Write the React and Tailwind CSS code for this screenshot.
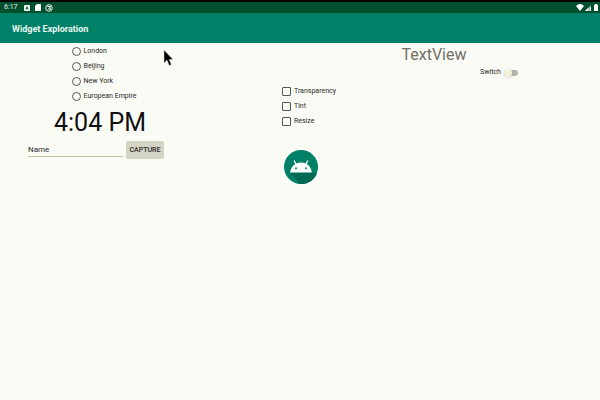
import React from "react";

const cities = ["London", "Beijing", "New York", "European Empire"];
const effects = ["Transparency", "Tint", "Resize"];

function StatusBar() {
  return (
    <div className="flex h-[13px] items-center border-t-2 border-black bg-[#005030] pl-1 pr-[2px] text-[7px] leading-none text-[#e2efe8]">
      <span className="w-5">6:17</span>
      <svg className="mr-[5px] h-[6px] w-[6px]" viewBox="0 0 6 6" aria-hidden="true">
        <rect width="6" height="6" rx="0.8" fill="#f2f7f4" />
        <path d="M2 4.5 3 1.5 4 4.5M2.3 3.6h1.4" fill="none" stroke="#005030" strokeWidth="0.8" />
      </svg>
      <svg className="mr-[4px] h-[7px] w-[6px]" viewBox="0 0 6 7" aria-hidden="true">
        <path d="M2 0h3.3q.7 0 .7.7v5.6q0 .7-.7.7H.7Q0 7 0 6.300V2z" fill="#fff" />
      </svg>
      <svg className="h-[8px] w-[8px]" viewBox="0 0 8 8" aria-hidden="true">
        <circle cx="4" cy="4" r="3.3" fill="none" stroke="#e2efe8" strokeWidth="1" />
        <path d="M2.300 2.500h3.200L3 5.500" fill="none" stroke="#e2efe8" strokeWidth="1" />
        <path d="M5.800 3v2.800H3.500z" fill="#e2efe8" />
      </svg>
      <svg className="ml-auto mr-[1px] h-[7px] w-[8px]" viewBox="0 0 8 7" aria-hidden="true">
        <path d="M0 2Q4-1.800 8 2L4 7z" fill="#fff" />
      </svg>
      <svg className="mr-[3px] h-[6px] w-[6px]" viewBox="0 0 6 6" aria-hidden="true">
        <path d="M0 6 6 0v6z" fill="#6d9a86" />
        <path d="M0 6 3.500 2.500V6zM4.700 2.200H6V6H4.700z" fill="#fff" />
      </svg>
      <svg className="h-[7px] w-[4px]" viewBox="0 0 4 7" aria-hidden="true">
        <path d="M1 0h2v.8h1V7H0V.8h1z" fill="#fff" />
      </svg>
    </div>
  );
}

function AndroidIcon() {
  return (
    <svg className="h-[34px] w-[34px]" viewBox="0 0 34 34" role="img" aria-label="Android">
      <circle cx="17" cy="17" r="17" fill="#008066" />
      <path d="M6.500 22.500h21l5.500 1A17 17 0 0 1 15 34z" fill="#006a55" />
      <path d="M12.300 14.500l-2-3.500M21.700 14.500l2-3.500" fill="none" stroke="#fff" strokeWidth="1.400" strokeLinecap="round" />
      <path d="M6.200 22.500C6.800 16.500 11.300 12.500 17 12.500s10.200 4 10.800 10z" fill="#fff" />
      <circle cx="12" cy="18.300" r="1" fill="#008066" />
      <circle cx="22" cy="18.300" r="1" fill="#008066" />
    </svg>
  );
}

function Cursor() {
  return (
    <svg className="pointer-events-none absolute left-[163px] top-[49px] h-[18px] w-[11px]" viewBox="0 0 11 18" aria-hidden="true">
      <path d="M1 1v13l3-2.800L6.200 16.500l2.200-1-2.300-5H10z" fill="#000" stroke="#ddd" strokeWidth="0.5" />
    </svg>
  );
}

export default function App() {
  return (
    <div className="relative min-h-screen bg-[#fbfbf5] font-['Roboto','Liberation_Sans',sans-serif] text-[#2a2a2a]">
      <StatusBar />
      <header className="flex h-[30px] items-center bg-[#008066] px-3 pt-[2px]">
        <h1 className="text-[9px] font-bold leading-none text-[#eaf7f0]">Widget Exploration</h1>
      </header>

      <main className="grid grid-cols-3 pt-px">
        <section className="flex flex-col items-center">
          <fieldset className="flex flex-col pl-2">
            {cities.map((city) => (
              <label key={city} className="flex h-[15px] items-center gap-[3px] text-[7px] leading-none">
                <input
                  type="radio"
                  name="city"
                  className="h-[9px] w-[9px] shrink-0 appearance-none rounded-full border border-[#555] checked:bg-[#008066]"
                />
                {city}
              </label>
            ))}
          </fieldset>
          <time className="mt-1 text-[25px] leading-[30px] text-[#111]">4:04 PM</time>
          <form className="mt-[3px] flex w-full items-center gap-[3px] pl-7 pr-9" onSubmit={(e) => e.preventDefault()}>
            <input
              type="text"
              aria-label="Name"
              defaultValue="Name"
              className="h-[14px] w-0 grow border-b border-[#bdbda0] bg-transparent text-[8px] leading-none outline-none"
            />
            <button type="submit" className="h-[18px] w-[38px] rounded-[2px] bg-[#d4d4c4] text-[7px] font-medium leading-none">
              CAPTURE
            </button>
          </form>
        </section>

        <section className="flex flex-col items-center pl-[2px] pt-10">
          <fieldset className="flex flex-col pl-4">
            {effects.map((effect) => (
              <label key={effect} className="flex h-[15px] items-center gap-[3px] text-[7px] leading-none">
                <input
                  type="checkbox"
                  className="h-[9px] w-[9px] shrink-0 appearance-none rounded-[1px] border border-[#555] checked:bg-[#008066]"
                />
                {effect}
              </label>
            ))}
          </fieldset>
          <div className="mt-[21px]">
            <AndroidIcon />
          </div>
        </section>

        <section className="flex flex-col items-center pt-px">
          <p className="mr-[132px] whitespace-nowrap text-base leading-5 text-[#707066]">TextView</p>
          <label className="mt-1 flex items-center gap-[3px] pr-[2px] text-[7px] leading-none">
            Switch
            <input
              type="checkbox"
              role="switch"
              className="flex h-[6px] w-[14px] appearance-none items-center rounded-full bg-[#b4b4aa] before:h-2 before:w-2 before:rounded-full before:bg-[#f2f2dc] before:shadow-sm before:content-['']"
            />
          </label>
        </section>
      </main>
      <Cursor />
    </div>
  );
}
